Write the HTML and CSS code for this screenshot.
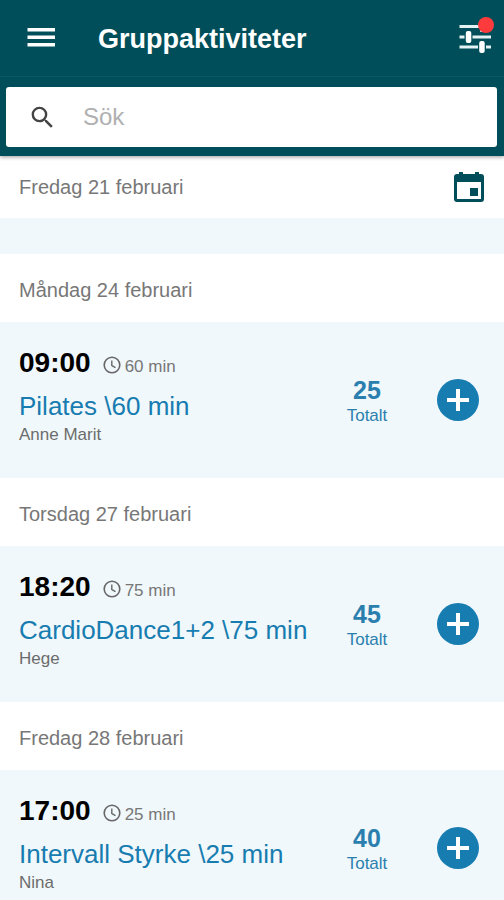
FILE: index.html
```html
<!DOCTYPE html>
<html lang="sv">
<head>
    <meta charset="UTF-8">
    <meta name="viewport" content="width=device-width, initial-scale=1.0">
    <title>Gruppaktiviteter</title>
    <link rel="stylesheet" href="styles.css">
</head>
<body>
    <header class="header">
        <div class="toolbar">
            <button type="button" class="icon-button menu-button" aria-label="Meny">
                <svg width="36" height="36" viewBox="0 0 36 36" fill="#fff">
                    <path d="M4.500 8h27.500v3.500h-27.500zM4.500 15.500h27.500v3.500h-27.500zM4.500 23h27.500v3.500h-27.500z"/>
                </svg>
            </button>
            <h1>Gruppaktiviteter</h1>
            <button type="button" class="icon-button" aria-label="Filter">
                <svg width="36" height="44" viewBox="0 -2 36 44">
                    <g fill="#e4f2f3">
                        <path d="M1.500 7h20v3h-20zM1.500 17.500h5v3h-5zM14.500 17.500H33v3H14.500zM1.500 27.500h18.500v3H1.500zM28 27.500h5v3h-5z"/>
                        <rect x="22" y="4" width="5" height="10" rx="1"/>
                        <rect x="7.800" y="13" width="5.500" height="12" rx="2" fill="#fff"/>
                        <rect x="21.200" y="23" width="5.500" height="12" rx="2" fill="#fff"/>
                    </g>
                    <circle cx="28" cy="7" r="8" fill="#fe3b3c"/>
                </svg>
            </button>
        </div>
        <form class="search" role="search">
            <label class="search-box">
                <svg width="29" height="29" viewBox="0 0 24 24" fill="#444">
                    <path d="M15.500 14h-.79l-.28-.27A6.470 6.470 0 0 0 16 9.500 6.500 6.500 0 1 0 9.500 16c1.610 0 3.090-.59 4.230-1.570l.27.28v.79l5 4.990L20.490 19l-4.990-5zm-6 0C7.010 14 5 11.990 5 9.500S7.010 5 9.500 5 14 7.010 14 9.500 11.990 14 9.500 14z"/>
                </svg>
                <input type="text" placeholder="Sök" aria-label="Sök">
            </label>
        </form>
    </header>

    <main class="list">
        <div class="date date-first">
            <h2>Fredag 21 februari</h2>
            <button type="button" class="icon-button" aria-label="Välj datum">
                <svg width="32" height="32" viewBox="0 0 32 32" fill="#004e59">
                    <path fill-rule="evenodd" d="M6 1h4v2h12V1h4v2h2a3 3 0 0 1 3 3v22a3 3 0 0 1-3 3H4a3 3 0 0 1-3-3V6a3 3 0 0 1 3-3h2zM4 11v17h24V11z"/>
                    <path d="M17 17h8v8h-8z"/>
                </svg>
            </button>
        </div>
        <div class="empty-day"></div>

        <h2 class="date">Måndag 24 februari</h2>
        <article class="activity">
            <div class="info">
                <div class="when">
                    <time class="start">09:00</time>
                    <svg class="clock" width="18" height="18" viewBox="0 0 18 18" fill="none" stroke="#666">
                        <circle cx="9" cy="9" r="7.800" stroke-width="1.600"/>
                        <path d="M8.800 4.500v5l3.700 2.200" stroke-width="1.400"/>
                    </svg>
                    <span class="duration">60 min</span>
                </div>
                <a class="title" href="#">Pilates \60 min</a>
                <p class="instructor">Anne Marit</p>
            </div>
            <div class="total"><strong>25</strong><span>Totalt</span></div>
            <button type="button" class="add" aria-label="Boka Pilates">
                <svg width="42" height="42" viewBox="0 0 42 42" fill="#fff"><path d="M19 10h4v9h9v4h-9v9h-4v-9h-9v-4h9z"/></svg>
            </button>
        </article>

        <h2 class="date">Torsdag 27 februari</h2>
        <article class="activity">
            <div class="info">
                <div class="when">
                    <time class="start">18:20</time>
                    <svg class="clock" width="18" height="18" viewBox="0 0 18 18" fill="none" stroke="#666">
                        <circle cx="9" cy="9" r="7.800" stroke-width="1.600"/>
                        <path d="M8.800 4.500v5l3.700 2.200" stroke-width="1.400"/>
                    </svg>
                    <span class="duration">75 min</span>
                </div>
                <a class="title" href="#">CardioDance1+2 \75 min</a>
                <p class="instructor">Hege</p>
            </div>
            <div class="total"><strong>45</strong><span>Totalt</span></div>
            <button type="button" class="add" aria-label="Boka CardioDance1+2">
                <svg width="42" height="42" viewBox="0 0 42 42" fill="#fff"><path d="M19 10h4v9h9v4h-9v9h-4v-9h-9v-4h9z"/></svg>
            </button>
        </article>

        <h2 class="date">Fredag 28 februari</h2>
        <article class="activity">
            <div class="info">
                <div class="when">
                    <time class="start">17:00</time>
                    <svg class="clock" width="18" height="18" viewBox="0 0 18 18" fill="none" stroke="#666">
                        <circle cx="9" cy="9" r="7.800" stroke-width="1.600"/>
                        <path d="M8.800 4.500v5l3.700 2.200" stroke-width="1.400"/>
                    </svg>
                    <span class="duration">25 min</span>
                </div>
                <a class="title" href="#">Intervall Styrke \25 min</a>
                <p class="instructor">Nina</p>
            </div>
            <div class="total"><strong>40</strong><span>Totalt</span></div>
            <button type="button" class="add" aria-label="Boka Intervall Styrke">
                <svg width="42" height="42" viewBox="0 0 42 42" fill="#fff"><path d="M19 10h4v9h9v4h-9v9h-4v-9h-9v-4h9z"/></svg>
            </button>
        </article>
    </main>
</body>
</html>
```
FILE: styles.css
```css
* {
    box-sizing: border-box;
}

body {
    font-family: "Liberation Sans", Arial, sans-serif;
    background-color: #fff;
    margin: 0;
    display: flex;
    flex-direction: column;
    height: 100vh;
}

h1, h2, p {
    margin: 0;
    font-weight: normal;
}

svg {
    display: block;
}

.icon-button {
    padding: 0;
    border: none;
    background: none;
    cursor: pointer;
}

/* Header */
.header {
    flex: none;
    background-color: #004e59;
    box-shadow: 0 1px 4px rgba(0, 0, 0, 0.4);
    z-index: 1;
}

.toolbar {
    display: flex;
    align-items: center;
    height: 77px;
    padding: 0 10px 0 23px;
    border-bottom: 1px solid #0b5862;
}

.menu-button {
    margin-right: 39px;
}

h1 {
    flex: 1;
    padding-top: 2px;
    font-size: 27px;
    font-weight: bold;
    line-height: 32px;
    color: #fff;
}

.search {
    padding: 10px 7px 9px 6px;
}

.search-box {
    display: flex;
    align-items: center;
    gap: 26px;
    height: 60px;
    padding: 0 22px;
    background-color: #fff;
    border-radius: 3px;
}

.search-box input {
    flex: 1;
    min-width: 0;
    padding: 0;
    border: none;
    outline: none;
    background: none;
    font-family: inherit;
    font-size: 24px;
    color: #444;
}

.search-box input::placeholder {
    color: #b0b0b0;
}

/* List of days */
.list {
    flex: 1;
    min-height: 0;
    overflow-y: auto;
    scrollbar-width: none;
}

.date {
    display: flex;
    align-items: center;
    justify-content: space-between;
    height: 68px;
    padding: 4px 19px 0;
    font-size: 20px;
    line-height: 24px;
    color: #777;
}

.date-first {
    height: 62px;
    padding-top: 0;
}

.date-first h2 {
    font-size: 20px;
}

.empty-day {
    height: 36px;
    background-color: #f0f8fb;
}

.activity {
    display: flex;
    align-items: center;
    min-height: 156px;
    padding: 25px 25px 25px 19px;
    background-color: #f0f8fb;
}

.info {
    flex: 1;
    align-self: flex-start;
}

.when {
    display: flex;
    align-items: baseline;
    margin-bottom: 12px;
}

.start {
    font-size: 28px;
    font-weight: bold;
    line-height: 32px;
    color: #000;
}

.clock {
    align-self: center;
    margin: 4px 4px 0 12px;
}

.duration {
    font-size: 17px;
    line-height: 20px;
    color: #777;
}

.title {
    display: block;
    margin-bottom: 4px;
    font-size: 26px;
    line-height: 30px;
    color: #177cb0;
    text-decoration: none;
}

.instructor {
    font-size: 17px;
    line-height: 20px;
    color: #6c6c6c;
}

.total {
    display: flex;
    flex-direction: column;
    align-items: center;
    gap: 2px;
    width: 60px;
    padding-top: 2px;
    margin-right: 40px;
    color: #2b7fae;
}

.total strong {
    font-size: 25px;
    line-height: 28px;
}

.total span {
    font-size: 17px;
    line-height: 20px;
}

.add {
    width: 42px;
    height: 42px;
    padding: 0;
    border: none;
    border-radius: 50%;
    background-color: #177cb0;
    cursor: pointer;
}
```
